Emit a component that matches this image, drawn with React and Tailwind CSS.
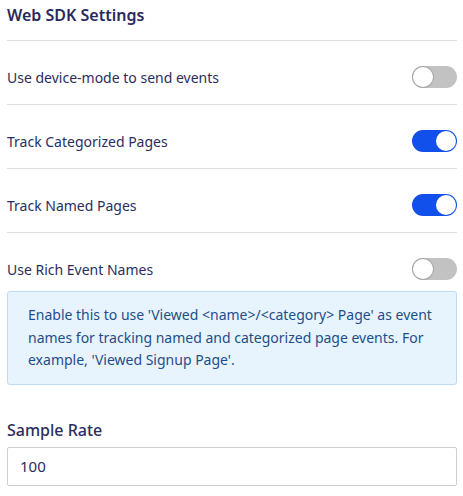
import React, { useState } from "react";

function Toggle({ on, onChange }) {
  return (
    <button
      type="button"
      onClick={() => onChange(!on)}
      className={`relative h-[22px] w-[45px] shrink-0 rounded-full ${on ? "bg-[#1150ea]" : "bg-[#c2c2c2]"}`}
    >
      <span
        className={`absolute top-[1px] h-[20px] w-[20px] rounded-full bg-white ${
          on ? "left-[24px]" : "left-[1px] shadow-[0_0_0_1px_#a8a8a8]"
        }`}
      />
    </button>
  );
}

function Row({ label, on, onChange, last }) {
  return (
    <div className={`flex items-center justify-between pt-[25px] ${last ? "" : "pb-[16px] border-b border-[#dedede]"}`}>
      <span className="text-[14px] text-[#2b2d5e]">{label}</span>
      <Toggle on={on} onChange={onChange} />
    </div>
  );
}

export default function App() {
  const [settings, setSettings] = useState({
    deviceMode: false,
    categorized: true,
    named: true,
    rich: false,
  });
  const set = (key) => (v) => setSettings({ ...settings, [key]: v });

  return (
    <div className="min-h-[496px] bg-white px-[7px] pr-[6px] font-['Noto_Sans',sans-serif]">
      <div className="h-[41px] border-b border-[#dedede] pt-[3px]">
        <h2 className="text-[16px] font-semibold leading-[24px] text-[#282a5c]">Web SDK Settings</h2>
      </div>
      <Row label="Use device-mode to send events" on={settings.deviceMode} onChange={set("deviceMode")} />
      <Row label="Track Categorized Pages" on={settings.categorized} onChange={set("categorized")} />
      <Row label="Track Named Pages" on={settings.named} onChange={set("named")} />
      <Row label="Use Rich Event Names" on={settings.rich} onChange={set("rich")} last />

      <div className="mt-[11px] rounded-[3px] border border-[#b9dcf8] bg-[#e8f4fd] px-[20px] py-[12px] text-[14px] leading-[22.5px] text-[#1d4e89]">
        Enable this to use 'Viewed &lt;name&gt;/&lt;category&gt; Page' as event names for tracking named and
        categorized page events. For example, 'Viewed Signup Page'.
      </div>

      <div className="mt-[33px]">
        <label className="block text-[16px] font-medium leading-[24px] text-[#2b2d5e]">Sample Rate</label>
        <input
          defaultValue="100"
          className="mt-[5px] h-[39px] w-full rounded-[2px] border border-[#cfcfcf] px-[12px] text-[15px] text-[#2b2d5e] outline-none"
        />
      </div>
    </div>
  );
}
